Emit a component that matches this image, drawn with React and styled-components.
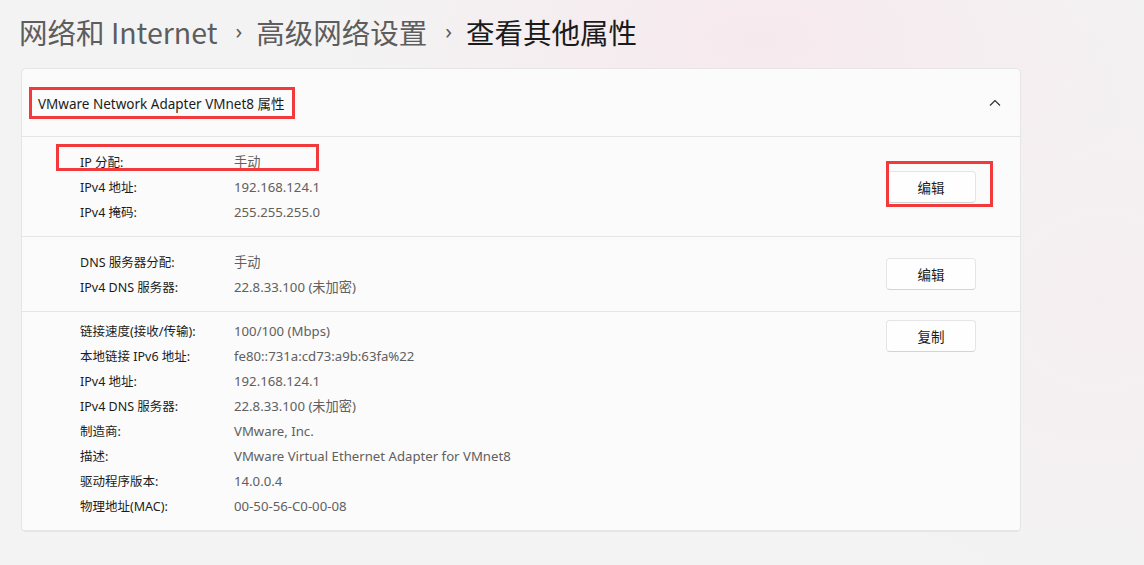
import React from "react";
import styled, { createGlobalStyle } from "styled-components";

const GlobalStyle = createGlobalStyle`
  html, body {
    margin: 0;
    padding: 0;
  }
  body {
    width: 1144px;
    height: 565px;
    overflow: hidden;
    font-family: "Noto Sans", "Noto Sans CJK SC", sans-serif;
    background: #f3f3f3;
    background-image:
      radial-gradient(ellipse 420px 220px at 760px 40px, rgba(247, 232, 238, 0.9), rgba(247, 232, 238, 0) 100%),
      radial-gradient(ellipse 300px 300px at 1100px 300px, rgba(246, 236, 240, 0.7), rgba(246, 236, 240, 0) 100%);
  }
`;

const basicInfo = [
  { label: "IP 分配:", value: "手动" },
  { label: "IPv4 地址:", value: "192.168.124.1" },
  { label: "IPv4 掩码:", value: "255.255.255.0" },
];

const dnsInfo = [
  { label: "DNS 服务器分配:", value: "手动" },
  { label: "IPv4 DNS 服务器:", value: "22.8.33.100 (未加密)" },
];

const detailInfo = [
  { label: "链接速度(接收/传输):", value: "100/100 (Mbps)" },
  { label: "本地链接 IPv6 地址:", value: "fe80::731a:cd73:a9b:63fa%22" },
  { label: "IPv4 地址:", value: "192.168.124.1" },
  { label: "IPv4 DNS 服务器:", value: "22.8.33.100 (未加密)" },
  { label: "制造商:", value: "VMware, Inc." },
  { label: "描述:", value: "VMware Virtual Ethernet Adapter for VMnet8" },
  { label: "驱动程序版本:", value: "14.0.0.4" },
  { label: "物理地址(MAC):", value: "00-50-56-C0-00-08" },
];

const ChevronUp = () => (
  <svg width="12" height="8" viewBox="0 0 12 8" fill="none">
    <path d="M1 6.5 L6 1.5 L11 6.5" stroke="#2b2b2b" strokeWidth="1.1" />
  </svg>
);

const Section = ({ rows, action, top }) => (
  <SectionRow $top={top}>
    <InfoList>
      {rows.map((r) => (
        <InfoRow key={r.label + r.value}>
          <Label>{r.label}</Label>
          <Value>{r.value}</Value>
        </InfoRow>
      ))}
    </InfoList>
    <ActionCell $top={top}>
      <Button>{action}</Button>
    </ActionCell>
  </SectionRow>
);

const App = () => {
  return (
    <>
      <GlobalStyle />
      <Page>
        <Breadcrumb>
          <Crumb>网络和 Internet</Crumb>
          <Sep>›</Sep>
          <Crumb>高级网络设置</Crumb>
          <Sep>›</Sep>
          <Crumb $current>查看其他属性</Crumb>
        </Breadcrumb>
        <Card>
          <CardHeader>
            <HeaderTitle>VMware Network Adapter VMnet8 属性</HeaderTitle>
            <ChevronUp />
          </CardHeader>
          <Section rows={basicInfo} action="编辑" />
          <Section rows={dnsInfo} action="编辑" />
          <Section rows={detailInfo} action="复制" top />
          <Highlight $left={7} $top={18} $width={266} $height={32} />
          <Highlight $left={34} $top={75} $width={263} $height={27} />
          <Highlight $left={864} $top={92} $width={107} $height={46} />
        </Card>
      </Page>
    </>
  );
};

export default App;

const Page = styled.div`
  padding: 0 0 0 21px;
  width: 1000px;
`;

const Breadcrumb = styled.div`
  display: flex;
  align-items: center;
  height: 68px;
  padding-bottom: 5px;
  box-sizing: border-box;
  margin-left: -2px;
`;

const Crumb = styled.span`
  font-family: "Noto Sans CJK SC", "Noto Sans", sans-serif;
  font-size: 28.5px;
  font-weight: 400;
  color: ${(p) => (p.$current ? "#1b1b1b" : "#5d5d5d")};
`;

const Sep = styled.span`
  font-family: "Noto Sans", sans-serif;
  font-size: 22px;
  color: #5d5d5d;
  margin: 0 14px 0 18px;
  position: relative;
  top: -2px;
`;

const Card = styled.div`
  position: relative;
  width: 1000px;
  background: #fbfbfb;
  border: 1px solid #e5e5e5;
  border-radius: 5px;
  box-sizing: border-box;
`;

const CardHeader = styled.div`
  display: flex;
  align-items: center;
  justify-content: space-between;
  height: 67px;
  padding: 0 19px 0 16px;
  border-bottom: 1px solid #e5e5e5;
`;

const HeaderTitle = styled.div`
  font-size: 13.5px;
  color: #1b1b1b;
`;

const SectionRow = styled.div`
  display: flex;
  align-items: ${(p) => (p.$top ? "flex-start" : "center")};
  justify-content: space-between;
  padding: ${(p) => (p.$top ? "6px 44px 12px 58px" : "12px 44px 12px 58px")};
  border-bottom: 1px solid #e5e5e5;
  &:last-of-type {
    border-bottom: none;
  }
`;

const InfoList = styled.div`
  display: flex;
  flex-direction: column;
`;

const InfoRow = styled.div`
  display: grid;
  grid-template-columns: 154px auto;
  height: 25px;
  align-items: center;
  font-size: 12.5px;
`;

const Label = styled.span`
  color: #1b1b1b;
`;

const Value = styled.span`
  color: #606060;
  font-size: 13.2px;
`;

const ActionCell = styled.div`
  padding-top: ${(p) => (p.$top ? "2px" : "0")};
`;

const Button = styled.button`
  width: 90px;
  height: 32px;
  background: #fefefe;
  border: 1px solid #e5e5e5;
  border-bottom-color: #d4d4d4;
  border-radius: 4px;
  font-family: "Noto Sans CJK SC", sans-serif;
  font-size: 13.5px;
  color: #1b1b1b;
  padding: 0;
`;

const Highlight = styled.div`
  position: absolute;
  left: ${(p) => p.$left}px;
  top: ${(p) => p.$top}px;
  width: ${(p) => p.$width}px;
  height: ${(p) => p.$height}px;
  border: 3px solid #f23a3c;
  box-sizing: border-box;
  pointer-events: none;
`;
